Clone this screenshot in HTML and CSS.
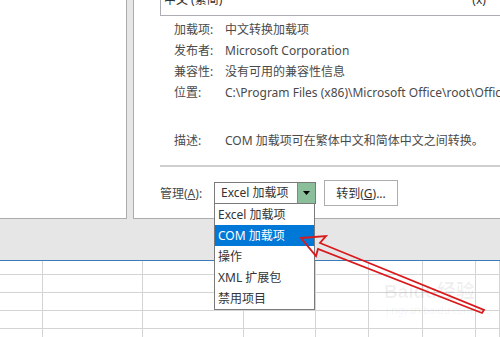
FILE: index.html
```html
<!DOCTYPE html>
<html lang="zh-CN">
<head>
    <meta charset="UTF-8">
    <title>COM 加载项</title>
    <link rel="stylesheet" href="styles.css">
</head>
<body>
<div class="screen">
    <div class="dialog">
        <div class="panel panel-left"></div>
        <div class="panel panel-right">
            <div class="addin-list">
                <div class="addin-row"><span>中文 (繁简)</span><span class="addin-type">(x)</span></div>
            </div>
            <dl class="details">
                <div class="detail"><dt>加载项:</dt><dd>中文转换加载项</dd></div>
                <div class="detail"><dt>发布者:</dt><dd>Microsoft Corporation</dd></div>
                <div class="detail"><dt>兼容性:</dt><dd>没有可用的兼容性信息</dd></div>
                <div class="detail"><dt>位置:</dt><dd>C:\Program Files (x86)\Microsoft Office\root\Office16\ADDINS\TCSCCONV.DLL</dd></div>
                <div class="detail detail-desc"><dt>描述:</dt><dd>COM 加载项可在繁体中文和简体中文之间转换。</dd></div>
            </dl>
            <div class="divider"></div>
            <div class="manage">
                <span class="manage-label">管理(<u>A</u>):</span>
                <div class="combo">
                    <span class="combo-value">Excel 加载项</span>
                    <span class="combo-btn">
                        <svg width="7" height="4" viewBox="0 0 7 4"><path d="M0 0h7L3.5 4z" fill="#000"/></svg>
                    </span>
                </div>
                <button class="go-btn">转到(<u>G</u>)...</button>
            </div>
        </div>
    </div>

    <div class="sheet">
        <div class="cell"></div><div class="cell"></div><div class="cell"></div><div class="cell"></div><div class="cell"></div><div class="cell"></div><div class="cell"></div><div class="cell"></div>
        <div class="cell"></div><div class="cell"></div><div class="cell"></div><div class="cell"></div><div class="cell"></div><div class="cell"></div><div class="cell"></div><div class="cell"></div>
        <div class="cell"></div><div class="cell"></div><div class="cell"></div><div class="cell"></div><div class="cell"></div><div class="cell"></div><div class="cell"></div><div class="cell"></div>
        <div class="cell"></div><div class="cell"></div><div class="cell"></div><div class="cell"></div><div class="cell"></div><div class="cell"></div><div class="cell"></div><div class="cell"></div>
        <div class="cell"></div><div class="cell"></div><div class="cell"></div><div class="cell"></div><div class="cell"></div><div class="cell"></div><div class="cell"></div><div class="cell"></div>
    </div>

    <ul class="dropdown">
        <li>Excel 加载项</li>
        <li class="selected">COM 加载项</li>
        <li>操作</li>
        <li>XML 扩展包</li>
        <li>禁用项目</li>
    </ul>

    <div class="watermark">
        <div class="wm-logo">Baidu经验</div>
        <div class="wm-url">jingyan.baidu.com</div>
    </div>

    <svg class="arrow" width="500" height="337" viewBox="0 0 500 337">
        <polygon points="301,238 326,236 320,243 484,310 482,313 318,249 316,256"
                 fill="none" stroke="#d9191b" stroke-width="1.8" stroke-linejoin="miter"/>
    </svg>
</div>
</body>
</html>
```

FILE: styles.css
```css
body {
    margin: 0;
    padding: 0;
    background-color: #fff;
    font-family: "Noto Sans", "Noto Sans CJK SC", sans-serif;
    font-size: 12px;
    color: #4a4a4a;
}
.screen {
    position: relative;
    width: 500px;
    height: 337px;
    overflow: hidden;
}

/* dialog */
.dialog {
    display: flex;
    height: 260px;
    background-color: #e6e6e6;
    border-bottom: 1px solid #3f7ab8;
}
.panel {
    height: 218px;
    background-color: #fff;
    border-bottom: 1px solid #acacac;
}
.panel-left {
    width: 126px;
    border-right: 1px solid #acacac;
}
.panel-right {
    flex: 1;
    margin-left: 6px;
    border-left: 1px solid #acacac;
    padding-left: 26px;
    overflow: hidden;
}
.addin-list {
    height: 15px;
    border: 1px solid #abadb3;
    border-top: none;
    border-right: none;
    overflow: hidden;
}
.addin-row {
    display: flex;
    margin-top: -9px;
    line-height: 18px;
    padding-left: 3px;
    color: #333;
}
.addin-type {
    margin-left: 250px;
}
.details {
    margin: 3px 0 0 14px;
}
.detail {
    display: flex;
    line-height: 21px;
    white-space: nowrap;
}
.detail dt {
    flex-shrink: 0;
    width: 51px;
}
.detail dd {
    margin: 0;
}
.detail-desc {
    margin-top: 27px;
}
.divider {
    height: 2px;
    margin-top: 14px;
    background-color: #cfcfcf;
}
.manage {
    display: flex;
    align-items: center;
    margin-top: 13px;
}
.manage-label {
    width: 54px;
}
.combo {
    display: flex;
    width: 100px;
    height: 20px;
    border: 1px solid #7a7a7a;
    background-color: #fff;
}
.combo-value {
    flex: 1;
    padding-left: 6px;
    line-height: 20px;
    color: #333;
}
.combo-btn {
    display: flex;
    align-items: center;
    justify-content: center;
    width: 17px;
    background-color: #8bbf9c;
    border-left: 1px solid #5f9c74;
}
.go-btn {
    margin-left: 8px;
    width: 74px;
    height: 26px;
    padding: 0;
    border: 1px solid #adadad;
    background-color: #fff;
    font-family: inherit;
    font-size: 12px;
    color: #333;
}

/* worksheet */
.sheet {
    display: grid;
    grid-template-columns: 43px 100px 101px 72px 53px 54px 53px 1fr;
    grid-template-rows: 14px 18px 18px 18px 18px;
}
.cell {
    border-right: 1px solid #d4d4d4;
    border-bottom: 1px solid #d4d4d4;
}

/* open list of the combo box */
.dropdown {
    position: absolute;
    left: 214px;
    top: 204px;
    width: 99px;
    margin: 0;
    padding: 0;
    list-style: none;
    background-color: #fff;
    border: 1px solid #7a7a7a;
    border-top: none;
}
.dropdown li {
    height: 21px;
    line-height: 21px;
    padding-left: 3px;
    color: #333;
}
.dropdown li.selected {
    background-color: #0078d7;
    color: #fff;
}

.watermark {
    position: absolute;
    left: 384px;
    top: 281px;
    color: rgba(0, 0, 0, 0.06);
    text-align: center;
}
.wm-logo {
    font-family: "Liberation Sans", "Noto Sans CJK SC", sans-serif;
    font-size: 19px;
    font-weight: bold;
    line-height: 22px;
}
.wm-url {
    font-size: 10px;
    line-height: 14px;
}
.arrow {
    position: absolute;
    left: 0;
    top: 0;
    pointer-events: none;
}
```
